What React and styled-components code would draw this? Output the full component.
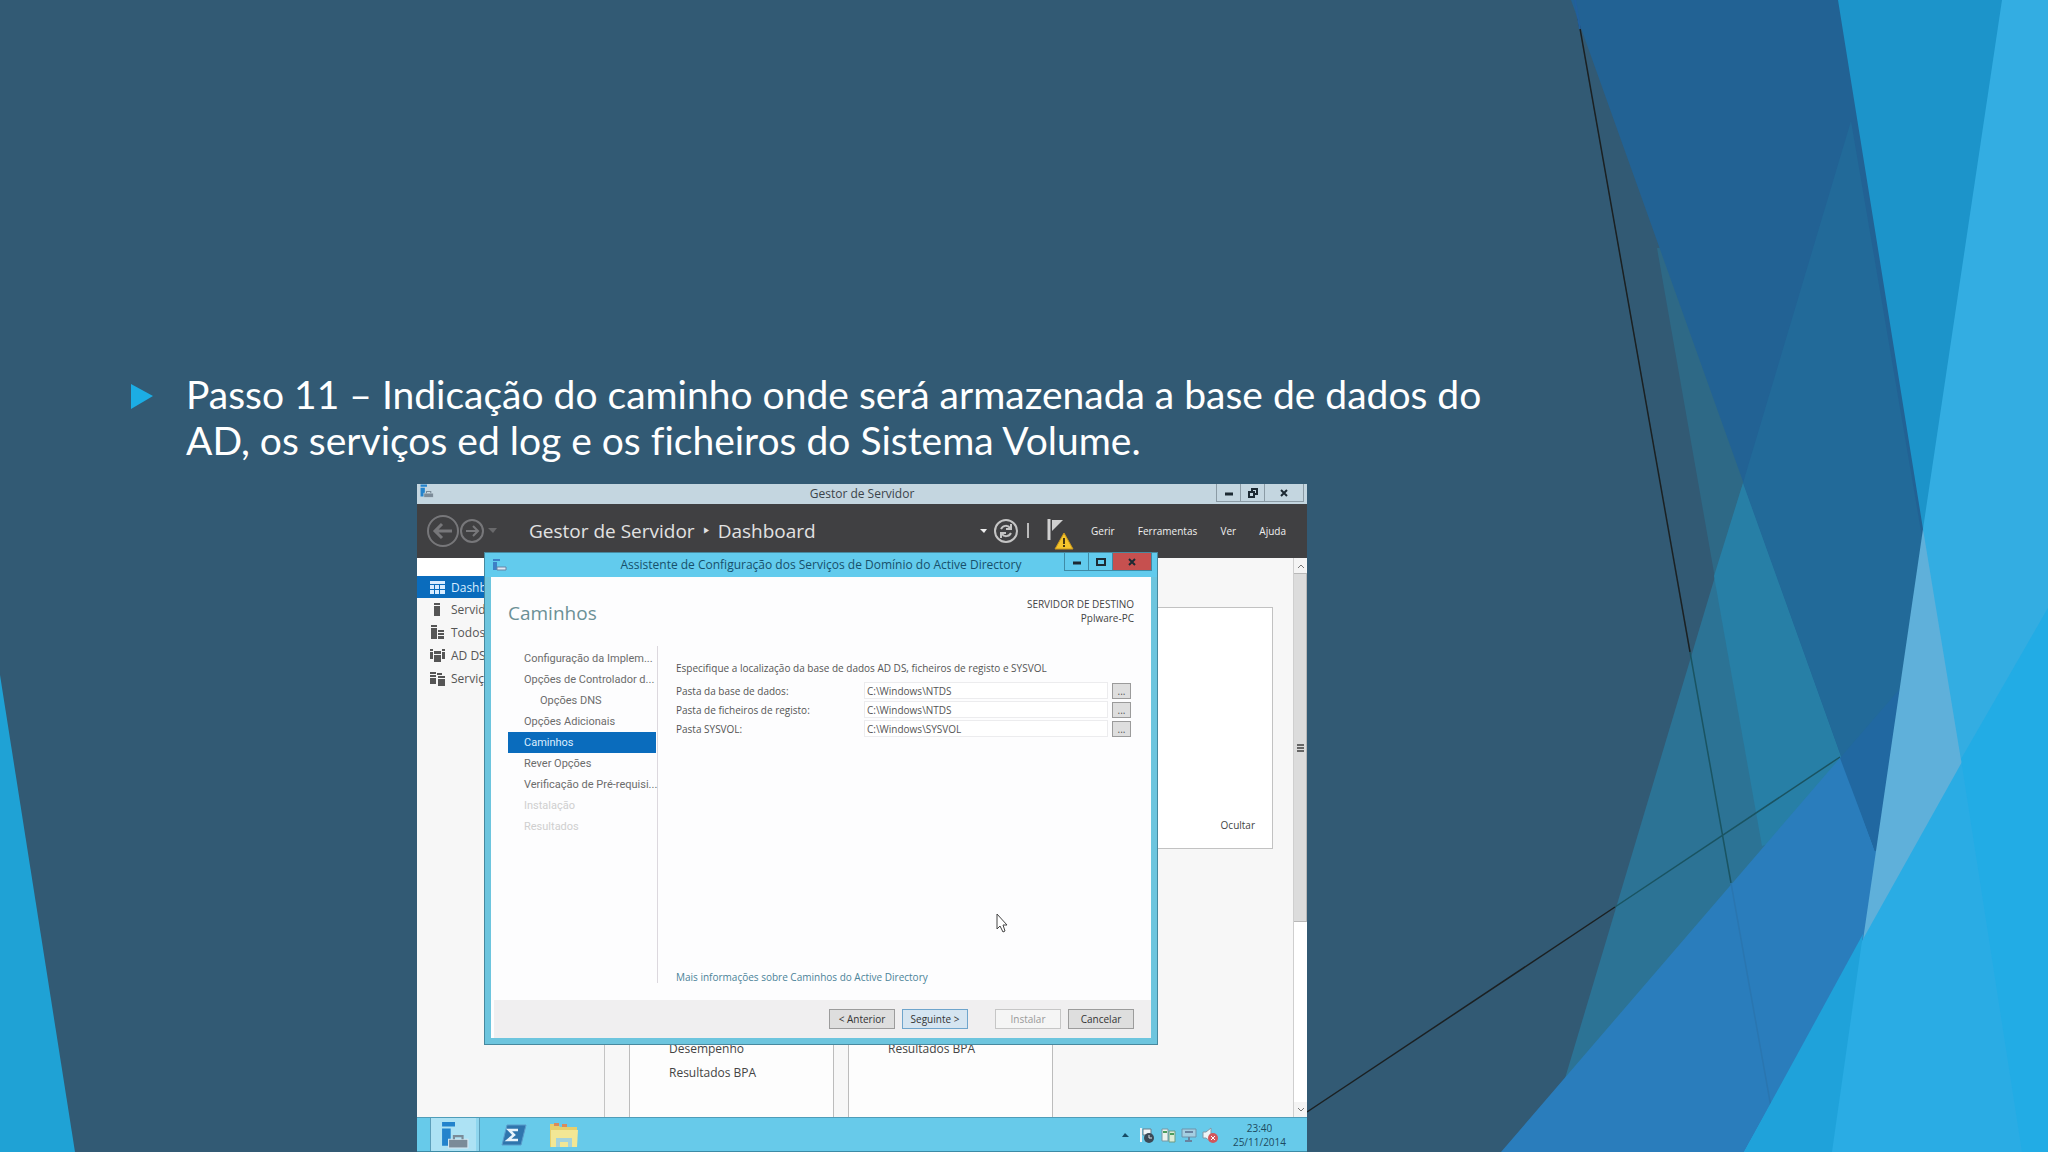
import React from 'react';
import styled, { createGlobalStyle } from 'styled-components';

const GlobalStyle = createGlobalStyle`
  * { box-sizing: border-box; }
  body { margin: 0; }
  button, input { font-family: inherit; }
`;

const Slide = styled.main`
  position: relative;
  min-height: 100vh;
  display: flex;
  flex-direction: column;
  overflow: hidden;
  background: #325a74;
  font-family: 'Open Sans', 'Noto Sans', sans-serif;
`;

const Backdrop = styled.svg`
  position: absolute;
  inset: 0;
  width: 100%;
  height: 100%;
`;

const Step = styled.div`
  position: relative;
  display: flex;
  align-items: flex-start;
  gap: 33px;
  padding: 371px 0 21px 131px;
`;

const Bullet = styled.svg`
  flex: none;
  width: 22px;
  height: 25px;
  margin-top: 13px;
`;

const StepText = styled.p`
  margin: 0;
  color: #fff;
  font-family: 'Lato', 'Open Sans', sans-serif;
  font-size: 39px;
  font-variant-ligatures: none;
  line-height: 46px;
  white-space: nowrap;
`;

const Stage = styled.div`
  position: relative;
  flex: 1;
  display: grid;
  grid-template-columns: 417fr 890fr 741fr;
`;

const Desktop = styled.section`
  grid-column: 2;
  position: relative;
  display: flex;
  flex-direction: column;
  min-height: 668px;
  background: #f7f7f7;
  color: #444;
  font-size: 12px;
`;

const TitleBar = styled.header`
  display: flex;
  justify-content: space-between;
  height: ${p => (p.$active ? '24px' : '20px')};
  padding: 0 ${p => (p.$active ? '5px' : '3px')};
  background: ${p => (p.$active ? '#62cbed' : '#c4d6e0')};
  color: ${p => (p.$active ? '#17506b' : '#3b444b')};
  line-height: ${p => (p.$active ? '24px' : '20px')};
`;

const TitleSide = styled.div`
  flex: 1;
  display: flex;
  align-items: flex-start;
  justify-content: ${p => (p.$end ? 'flex-end' : 'flex-start')};
`;

const WindowTitle = styled.h2`
  margin: 0;
  font-size: 12px;
  font-weight: 400;
  line-height: inherit;
  white-space: nowrap;
`;

const WindowButton = styled.button`
  display: grid;
  place-items: center;
  width: ${p => (p.$wide ? '40px' : '25px')};
  height: 18px;
  margin-left: -1px;
  padding: 0;
  border: 1px solid ${p => (p.$active ? '#3f8ba6' : '#8b9ba5')};
  border-top: 0;
  background: ${p => (p.$close ? '#c6504f' : 'transparent')};
  color: #1d2a33;
`;

const NavBar = styled.div`
  display: flex;
  align-items: center;
  height: 54px;
  padding: 0 21px 0 9px;
  background: #404042;
  color: #e2e2e2;
`;

const History = styled.div`
  display: flex;
  align-items: center;
  width: 103px;
`;

const Breadcrumb = styled.h1`
  flex: 1;
  display: flex;
  gap: 8px;
  margin: 0;
  font-size: 19px;
  font-weight: 400;
  line-height: 24px;
  white-space: nowrap;
`;

const Tools = styled.div`
  display: flex;
  align-items: center;
  margin-right: 17px;
`;

const Menu = styled.nav`
  display: flex;
  justify-content: space-between;
  width: 195px;
`;

const MenuButton = styled.button`
  padding: 0;
  border: 0;
  background: none;
  color: #f0f0f0;
  font-size: 10px;
  line-height: 16px;
`;

const Workspace = styled.div`
  flex: 1;
  display: flex;
  min-height: 0;
`;

const Sidebar = styled.aside`
  width: 188px;
  padding-top: 18px;
  border-right: 1px solid #c4c4c4;
  background: linear-gradient(#fff 18px, #f7f7f7 18px);
`;

const SideItem = styled.a`
  display: flex;
  align-items: center;
  gap: 6px;
  height: ${p => (p.$active ? '22px' : '23px')};
  padding-left: 13px;
  background: ${p => (p.$active ? '#0a6cbd' : 'none')};
  color: ${p => (p.$active ? '#d8ecff' : '#555')};
  font-size: 12px;
  text-decoration: none;
  white-space: nowrap;
`;

const Dashboard = styled.div`
  flex: 1;
  display: flex;
  flex-direction: column;
  gap: 150px;
  padding: 49px 20px 0 24px;
`;

const WelcomeCard = styled.div`
  display: flex;
  align-items: flex-end;
  justify-content: flex-end;
  height: 242px;
  padding: 0 17px 14px;
  border: 1px solid #c2c2c2;
  background: #fff;
`;

const TextButton = styled.button`
  padding: 0;
  border: 0;
  background: none;
  color: #444;
  font-size: 10px;
  line-height: 18px;
`;

const Tiles = styled.div`
  flex: 1;
  display: flex;
  gap: 14px;
`;

const Tile = styled.div`
  width: 205px;
  padding: 38px 0 0 39px;
  border: 1px solid #bcbcbc;
  border-width: 0 1px;
  background: #fdfdfd;
  font-size: 12px;
  line-height: 24px;
`;

const Scrollbar = styled.div`
  display: flex;
  flex-direction: column;
  width: 14px;
  border-left: 1px solid #cfcfcf;
  background: #fff;
`;

const ScrollArrow = styled.button`
  display: grid;
  place-items: center;
  height: 15px;
  padding: 0;
  border: 0;
  background: #f4f4f4;
  color: #777;
`;

const ScrollTrack = styled.div`
  flex: 1;
  display: flex;
  flex-direction: column;
`;

const ScrollThumb = styled.div`
  display: grid;
  place-items: center;
  height: 66%;
  border: 1px solid #b8b8b8;
  border-left: 0;
  background: #dcdcdc;
`;

const Wizard = styled.section`
  position: absolute;
  top: 68px;
  right: 149px;
  bottom: 107px;
  left: 67px;
  display: flex;
  flex-direction: column;
  border: 1px solid #47899f;
  background: #6dc5de;
`;

const WizardPage = styled.div`
  flex: 1;
  display: flex;
  flex-direction: column;
  min-height: 0;
  margin: 0 6px 6px;
  background: #fdfdfe;
`;

const WizardHead = styled.div`
  display: flex;
  justify-content: space-between;
  height: 69px;
  padding: 20px 17px 0;
`;

const PageTitle = styled.h3`
  margin: 0;
  color: #6b9096;
  font-size: 19px;
  font-weight: 400;
  line-height: 32px;
`;

const Target = styled.p`
  margin: 0;
  color: #444;
  font-size: 10px;
  line-height: 14px;
  text-align: right;
`;

const WizardBody = styled.div`
  flex: 1;
  display: flex;
  padding: 0 17px 17px;
`;

const Steps = styled.ol`
  width: 150px;
  margin: 0;
  padding: 2px 0 0;
  border-right: 1px solid #dcd8de;
  list-style: none;
`;

const StepItem = styled.li`
  height: 21px;
  margin-right: 1px;
  padding-left: ${p => (p.$nested ? '32px' : '16px')};
  background: ${p => (p.$active ? '#0a6cbd' : 'none')};
  color: ${p => (p.$active ? '#dceeff' : p.$disabled ? '#cfcfcf' : '#6c6c6c')};
  font-family: 'Roboto', 'Open Sans', sans-serif;
  font-size: 11px;
  line-height: 21px;
  white-space: nowrap;
`;

const Fields = styled.form`
  flex: 1;
  display: flex;
  flex-direction: column;
  padding: 12px 3px 0 18px;
  color: #555;
  font-size: 10px;
`;

const Hint = styled.p`
  margin: 0 0 3px;
  line-height: 20px;
  white-space: nowrap;
`;

const Field = styled.div`
  display: grid;
  grid-template-columns: 184px 1fr 19px;
  column-gap: 4px;
  align-items: center;
  height: 19px;
`;

const PathInput = styled.input`
  width: 100%;
  min-width: 0;
  height: 17px;
  padding: 0 2px;
  border: 1px solid #ececee;
  background: #fff;
  color: #555;
  font-size: 10px;
`;

const BrowseButton = styled.button`
  height: 16px;
  padding: 0;
  border: 1px solid #9b9b9b;
  background: #dedede;
  color: #555;
  font-size: 10px;
  line-height: 12px;
`;

const MoreLink = styled.a`
  margin-top: auto;
  margin-bottom: -4px;
  color: #4b8399;
  line-height: 20px;
  text-decoration: none;
`;

const WizardFoot = styled.footer`
  display: flex;
  align-items: center;
  justify-content: flex-end;
  gap: 7px;
  height: 38px;
  margin-left: 3px;
  padding-right: 17px;
  background: #f0eff0;
`;

const FootButton = styled.button`
  width: 66px;
  height: 20px;
  padding: 0;
  border: 1px solid ${p => (p.$primary ? '#6fa5cc' : '#9c9c9c')};
  background: ${p => (p.$primary ? '#d5e5f1' : '#dedede')};
  color: #333;
  font-size: 10px;
  line-height: 16px;
  &:disabled { margin-left: 20px; border-color: #c6c6c6; background: #f5f5f5; color: #999; }
`;

const Cursor = styled.svg`
  position: absolute;
  left: 65%;
  top: 429px;
  width: 12px;
  height: 20px;
`;

const Taskbar = styled.footer`
  display: flex;
  align-items: center;
  justify-content: space-between;
  height: 35px;
  padding: 0 21px 0 13px;
  border-top: 1px solid #4f9db9;
  border-bottom: 1px solid #3c8ba6;
  background: #67caea;
`;

const TaskGroup = styled.div`
  display: flex;
  align-items: center;
  gap: ${p => p.$gap};
  height: 100%;
`;

const TaskButton = styled.button`
  display: grid;
  place-items: center;
  width: ${p => (p.$active ? '50px' : '32px')};
  height: 100%;
  padding: 0;
  border: 1px solid ${p => (p.$active ? '#5b9fbb' : 'transparent')};
  border-width: 0 1px;
  background: ${p => (p.$active ? '#ade2f4' : 'none')};
  box-shadow: ${p => (p.$active ? 'inset -3px 0 #8fd6ee' : 'none')};
`;

const Clock = styled.time`
  margin-left: 8px;
  color: #1d4a60;
  font-size: 10px;
  line-height: 14px;
  text-align: center;
`;

const sideItems = [
    { label: 'Dashb', icon: 'grid', active: true },
    { label: 'Servid', icon: 'server' },
    { label: 'Todos', icon: 'servers' },
    { label: 'AD DS', icon: 'domain' },
    { label: 'Serviç', icon: 'files' },
];

const steps = [
    { label: 'Configuração da Implem...' },
    { label: 'Opções de Controlador d...' },
    { label: 'Opções DNS', nested: true },
    { label: 'Opções Adicionais' },
    { label: 'Caminhos', active: true },
    { label: 'Rever Opções' },
    { label: 'Verificação de Pré-requisi...' },
    { label: 'Instalação', disabled: true },
    { label: 'Resultados', disabled: true },
];

const paths = [
    { id: 'db', label: 'Pasta da base de dados:', value: 'C:\\Windows\\NTDS' },
    { id: 'log', label: 'Pasta de ficheiros de registo:', value: 'C:\\Windows\\NTDS' },
    { id: 'sysvol', label: 'Pasta SYSVOL:', value: 'C:\\Windows\\SYSVOL' },
];

function Facets() {
    return (
        <Backdrop viewBox="0 0 2048 1152" preserveAspectRatio="none" aria-hidden="true">
            <path d="M0 675L75 1152H0Z" fill="#1fa2d5" />
            {/* teal facets */}
            <path d="M1657 248L1762 846L1900 846V248Z" fill="#2e6986" />
            <path d="M1743 483L1543 1152H1900V483Z" fill="#2c7395" />
            <path d="M1743 483L1714 576L1762 846L1900 800V483Z" fill="#277fa6" />
            <path d="M1307 1112L1615 907" stroke="#1b2022" strokeWidth="1.5" />
            <path d="M1575 0L1690 652" stroke="#1b2022" strokeWidth="1.5" />
            <path d="M1615 907L1840 757M1690 652L1731 883" stroke="#1a5462" strokeWidth="1.5" />
            <path d="M1501 1152L1840 758L2048 516V1152Z" fill="#2a7dbc" />
            <path d="M1731 883L1779 1152" stroke="#2a76b0" strokeWidth="1.5" />
            {/* dark blue wedge */}
            <path d="M1571 0H1860L1960 760L1875 851Z" fill="#226294" />
            <path d="M1851 121L1743 483L1875 851L1960 760Z" fill="#226a99" />
            <path d="M1840 758L1905 683L1890 851H1875Z" fill="#2168a1" />
            {/* bright facets on the right */}
            <path d="M1838 0H2048V700H1945L1923 529Z" fill="#1c94ca" />
            <path d="M1923 529L2000 760L1863 940Z" fill="#5fb0da" />
            <path d="M2002 0H2048V760H1961L1923 529Z" fill="#33ade2" />
            <path d="M2048 608L1744 1152H2048Z" fill="#2aace4" />
            <path d="M1863 934L1744 1152H1832Z" fill="#1fa2da" />
            <path d="M2048 608L1961 759L2022 1152H2048Z" fill="#22ace5" />
            <path d="M1575 0L1580 29" stroke="#225f9c" strokeWidth="2" />
        </Backdrop>
    );
}

function ServerLogo({ size = 13 }) {
    return (
        <svg width={size} height={size} viewBox="0 0 26 26" aria-hidden="true">
            <path d="M1 1h12v4H1zM1 7h8v16H1z" fill="#2383cc" />
            <path d="M7 17h18v8H7z" fill="#7b8b98" stroke="#d5e6ef" />
            <path d="M12 17v-3h8v3" fill="none" stroke="#7b8b98" strokeWidth="2" />
        </svg>
    );
}

function SideIcon({ name }) {
    return (
        <svg width="15" height="15" viewBox="0 0 15 15" fill="currentColor" aria-hidden="true">
            {name === 'grid' && <path d="M0 1h15v3H0zM0 5h4v4H0zM5 5h4v4H5zM10 5h5v4h-5zM0 10h4v4H0zM5 10h4v4H5zM10 10h5v4h-5z" />}
            {name === 'server' && <path d="M4 1h6v2H4zM4 4h6v10H4z" />}
            {name === 'servers' && <path d="M1 0h6v2H1zM1 3h6v11H1zM8 5h6v2H8zM8 8h6v2H8zM8 11h6v3H8z" />}
            {name === 'domain' && <path d="M0 1h3v2H0zM0 4h3v7H0zM4 3h7v3H4zM4 7h7v7H4zM12 1h3v2h-3zM12 4h3v7h-3z" />}
            {name === 'files' && <path d="M0 1h6v2H0zM0 4h6v2H0zM0 7h6v6H0zM7 2h5v2H7zM8 5h7v2H8zM8 8h7v7H8z" />}
        </svg>
    );
}

function WindowButtons({ active }) {
    return (
        <>
            <WindowButton type="button" $active={active} aria-label="Minimizar">
                <svg width="10" height="10"><path d="M1 6h8" stroke="currentColor" strokeWidth="3" /></svg>
            </WindowButton>
            <WindowButton type="button" $active={active} aria-label="Maximizar">
                <svg width="10" height="10" fill="none" stroke="currentColor" strokeWidth="2">
                    {active ? <path d="M1 2h8v6H1z" /> : <path d="M1 4h5v5H1zM4 3V1h5v5H7" />}
                </svg>
            </WindowButton>
            <WindowButton type="button" $active={active} $close={active} $wide aria-label="Fechar">
                <svg width="10" height="10"><path d="M2 2l6 6M8 2L2 8" stroke="currentColor" strokeWidth="2" /></svg>
            </WindowButton>
        </>
    );
}

function ManagerBar() {
    return (
        <NavBar>
            <History>
                <svg width="74" height="34" viewBox="0 0 74 34" fill="none" stroke="#77777a" strokeWidth="2" aria-hidden="true">
                    <circle cx="17" cy="17" r="15" />
                    <path d="M26 17H10M16 10l-7 7 7 7" strokeWidth="3" />
                    <circle cx="46" cy="17" r="11" />
                    <path d="M40 17h11M47 12l5 5-5 5" strokeWidth="2" />
                    <path d="M62 14h9l-4 5z" fill="#69696b" stroke="none" />
                </svg>
            </History>
            <Breadcrumb><span>Gestor de Servidor</span><span>‣</span><span>Dashboard</span></Breadcrumb>
            <Tools>
                <svg width="94" height="40" viewBox="0 0 94 40" fill="none" aria-hidden="true">
                    <path d="M0 18h7l-3 4z" fill="#eee" />
                    <circle cx="26" cy="20" r="11" stroke="#c4c4c4" strokeWidth="2" />
                    <path d="M21 18c2-4 7-4 9-1M31 13v5h-5M31 22c-2 4-7 4-9 1M21 27v-5h5" stroke="#c4c4c4" strokeWidth="2" />
                    <path d="M48 12v15" stroke="#bbb" strokeWidth="2" />
                    <path d="M69 8v21" stroke="#d0d0d0" strokeWidth="3" />
                    <path d="M72 9h11l-11 11z" fill="#d0d0d0" />
                    <path d="M84 22l9 16H75z" fill="#f5c52c" stroke="#c9961b" />
                    <path d="M84 27v6M84 34v2" stroke="#463813" strokeWidth="2" />
                </svg>
            </Tools>
            <Menu>
                <MenuButton type="button">Gerir</MenuButton>
                <MenuButton type="button">Ferramentas</MenuButton>
                <MenuButton type="button">Ver</MenuButton>
                <MenuButton type="button">Ajuda</MenuButton>
            </Menu>
        </NavBar>
    );
}

function ConfigWizard() {
    return (
        <Wizard>
            <TitleBar $active>
                <TitleSide>
                    <svg width="22" height="20" viewBox="0 0 22 20" aria-hidden="true">
                        <path d="M3 6h7v2H3zM3 9h4v8H3z" fill="#3d7fc6" />
                        <path d="M7 14h9v3H7z" fill="#dfe9f4" stroke="#6684a5" />
                    </svg>
                </TitleSide>
                <WindowTitle>Assistente de Configuração dos Serviços de Domínio do Active Directory</WindowTitle>
                <TitleSide $end><WindowButtons active /></TitleSide>
            </TitleBar>
            <WizardPage>
                <WizardHead>
                    <PageTitle>Caminhos</PageTitle>
                    <Target>SERVIDOR DE DESTINO<br />Pplware-PC</Target>
                </WizardHead>
                <WizardBody>
                    <Steps>
                        {steps.map(s => (
                            <StepItem key={s.label} $active={s.active} $nested={s.nested} $disabled={s.disabled}>{s.label}</StepItem>
                        ))}
                    </Steps>
                    <Fields onSubmit={e => e.preventDefault()}>
                        <Hint>Especifique a localização da base de dados AD DS, ficheiros de registo e SYSVOL</Hint>
                        {paths.map(p => (
                            <Field key={p.id}>
                                <label htmlFor={p.id}>{p.label}</label>
                                <PathInput id={p.id} type="text" defaultValue={p.value} />
                                <BrowseButton type="button">...</BrowseButton>
                            </Field>
                        ))}
                        <MoreLink href="#mais">Mais informações sobre Caminhos do Active Directory</MoreLink>
                    </Fields>
                </WizardBody>
                <WizardFoot>
                    <FootButton type="button">&lt; Anterior</FootButton>
                    <FootButton type="button" $primary>Seguinte &gt;</FootButton>
                    <FootButton type="button" disabled>Instalar</FootButton>
                    <FootButton type="button">Cancelar</FootButton>
                </WizardFoot>
            </WizardPage>
        </Wizard>
    );
}

function TaskbarRow() {
    return (
        <Taskbar>
            <TaskGroup $gap="18px">
                <TaskButton type="button" $active aria-label="Gestor de Servidor"><ServerLogo size={28} /></TaskButton>
                <TaskButton type="button" aria-label="PowerShell">
                    <svg width="26" height="22" viewBox="0 0 26 22">
                        <path d="M6 1h19l-5 20H1z" fill="#2f75ad" stroke="#5b9ccb" />
                        <path d="M17 6H8l5 5-6 5h10" fill="none" stroke="#e8f3fb" strokeWidth="2.5" />
                    </svg>
                </TaskButton>
                <TaskButton type="button" aria-label="Explorador">
                    <svg width="30" height="28" viewBox="0 0 30 28">
                        <path d="M1 3h8l2 3h17v20H1z" fill="#e6cf6c" />
                        <path d="M5 2h5v3H5zM13 3h5v3h-5z" fill="#d98a5b" />
                        <path d="M2 9h27l-1 17H2z" fill="#f2e795" />
                        <path d="M7 26v-9h16v9h-4v-5h-8v5z" fill="#a5d3dc" />
                    </svg>
                </TaskButton>
            </TaskGroup>
            <TaskGroup $gap="6px">
                <svg width="98" height="18" viewBox="0 0 98 18" fill="none" aria-hidden="true">
                    <path d="M1 11h7L4 7z" fill="#174c66" />
                    <path d="M20 2v14" stroke="#eef5f8" strokeWidth="2" />
                    <path d="M22 3h8v6h-8z" fill="#eef5f8" stroke="#6b7f8b" />
                    <circle cx="28" cy="12" r="5" fill="#3b4a57" />
                    <path d="M28 9v3h3" stroke="#dfe8ee" />
                    <path d="M41 3h6v12h-6z" fill="#eaf2ee" stroke="#7a98a3" />
                    <path d="M48 5h6v11h-6z" fill="#dcebd6" stroke="#6d9c85" />
                    <path d="M42 6h4M49 8h4" stroke="#4c9c5d" strokeWidth="2" />
                    <path d="M61 3h14v8H61z" fill="#a4cfe2" stroke="#6f93ab" />
                    <path d="M64 6h8M68 11v5M64 15h7" stroke="#6883a0" strokeWidth="2" />
                    <path d="M82 6h3l5-4v14l-5-4h-3z" fill="#eef4f7" stroke="#8397a5" />
                    <circle cx="92" cy="12" r="5" fill="#d2565b" />
                    <path d="M90 10l4 4M94 10l-4 4" stroke="#fff" />
                </svg>
                <Clock>23:40<br />25/11/2014</Clock>
            </TaskGroup>
        </Taskbar>
    );
}

export default function App() {
    return (
        <>
            <GlobalStyle />
            <Slide>
                <Facets />
                <Step>
                    <Bullet viewBox="0 0 22 25" aria-hidden="true"><path d="M0 0L22 12L0 25Z" fill="#1cade4" /></Bullet>
                    <StepText>
                        Passo 11 – Indicação do caminho onde será armazenada a base de dados do<br />
                        AD, os serviços ed log e os ficheiros do Sistema Volume.
                    </StepText>
                </Step>
                <Stage>
                    <Desktop>
                        <TitleBar>
                            <TitleSide><ServerLogo size={14} /></TitleSide>
                            <WindowTitle>Gestor de Servidor</WindowTitle>
                            <TitleSide $end><WindowButtons /></TitleSide>
                        </TitleBar>
                        <ManagerBar />
                        <Workspace>
                            <Sidebar>
                                {sideItems.map(item => (
                                    <SideItem key={item.label} href="#painel" $active={item.active}>
                                        <SideIcon name={item.icon} />
                                        {item.label}
                                    </SideItem>
                                ))}
                            </Sidebar>
                            <Dashboard>
                                <WelcomeCard><TextButton type="button">Ocultar</TextButton></WelcomeCard>
                                <Tiles>
                                    <Tile>Desempenho<br />Resultados BPA</Tile>
                                    <Tile>Resultados BPA</Tile>
                                </Tiles>
                            </Dashboard>
                            <Scrollbar>
                                <ScrollArrow type="button" aria-label="Subir">
                                    <svg width="8" height="6"><path d="M1 5l3-3 3 3" fill="none" stroke="currentColor" strokeWidth="1" /></svg>
                                </ScrollArrow>
                                <ScrollTrack>
                                    <ScrollThumb>
                                        <svg width="7" height="8"><path d="M0 1h7M0 4h7M0 7h7" stroke="#666" strokeWidth="2" /></svg>
                                    </ScrollThumb>
                                </ScrollTrack>
                                <ScrollArrow type="button" aria-label="Descer">
                                    <svg width="8" height="6"><path d="M1 1l3 3 3-3" fill="none" stroke="currentColor" strokeWidth="1" /></svg>
                                </ScrollArrow>
                            </Scrollbar>
                        </Workspace>
                        <TaskbarRow />
                        <ConfigWizard />
                        <Cursor viewBox="0 0 12 20" aria-hidden="true">
                            <path d="M1 1v15l3-3 3 6 2-1-2-6h4z" fill="#fff" stroke="#444" />
                        </Cursor>
                    </Desktop>
                </Stage>
            </Slide>
        </>
    );
}
